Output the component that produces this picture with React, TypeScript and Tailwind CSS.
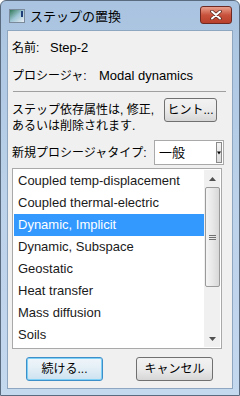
import React from "react";

const items = [
  "Coupled temp-displacement",
  "Coupled thermal-electric",
  "Dynamic, Implicit",
  "Dynamic, Subspace",
  "Geostatic",
  "Heat transfer",
  "Mass diffusion",
  "Soils",
];

const font = { fontFamily: '"Liberation Sans", "Noto Sans CJK JP", sans-serif' };

export default function App() {
  return (
    <div
      className="w-[240px] h-[396px] border border-[#5a6b80] rounded-t-[6px] bg-gradient-to-b from-[#a9c3e0] via-[#bcd2ea] to-[#c4d8ee] flex flex-col text-[12px] text-black"
      style={font}
    >
      {/* title bar */}
      <div className="h-[29px] flex items-center pl-[8px] pr-[8px] shrink-0">
        <div className="w-[16px] h-[14px] border border-[#7a8a9a] bg-gradient-to-br from-[#2f7a5a] via-[#9fc6d6] to-[#e8eef4] mr-[5px] mt-[1px] relative">
          <div className="absolute right-[1px] top-[1px] w-[2px] h-[6px] bg-[#1e3f7a]" />
        </div>
        <span className="text-[13px] leading-none mt-[1px]">ステップの置換</span>
        <div className="ml-auto mr-[-1px] mt-[-2px] w-[32px] h-[18px] rounded-[3px] border border-[#6e2a22] bg-gradient-to-b from-[#e8a08f] via-[#c8523c] to-[#b8402c] flex items-center justify-center">
          <svg width="14" height="10" viewBox="0 0 14 10">
            <path d="M3 1.5 L11 8.5 M11 1.5 L3 8.5" stroke="#5a2a22" strokeWidth="3.6" strokeLinecap="round" />
            <path d="M3 1.5 L11 8.5 M11 1.5 L3 8.5" stroke="#ffffff" strokeWidth="2" strokeLinecap="round" />
          </svg>
        </div>
      </div>

      {/* client area */}
      <div className="mx-[6px] mb-[6px] flex-1 border border-[#8fa6c0] bg-[#f0f0f0] flex flex-col pl-[4px] pr-[5px]">
        <div className="mt-[8px] leading-[18px] flex items-baseline">
          <span className="w-[38px]">名前:</span>
          <span className="text-[13px]">Step-2</span>
        </div>
        <div className="mt-[10px] leading-[18px] flex items-baseline">
          <span className="w-[87px]">プロシージャ:</span>
          <span className="text-[13px]">Modal dynamics</span>
        </div>
        <div className="mt-[6px] h-[1px] bg-[#a0a0a0] mr-[1px] ml-[1px]" />
        <div className="mt-[9px] flex items-start">
          <div className="leading-[16px] w-[152px] pt-[1px]">
            <div>ステップ依存属性は, 修正,</div>
            <div>あるいは削除されます.</div>
          </div>
          <button className="mt-[-3px] w-[53px] h-[24px] rounded-[3px] border border-[#707070] bg-gradient-to-b from-[#f2f2f2] via-[#ebebeb] to-[#d6d6d6] text-[12px] leading-none" style={font}>
            ヒント...
          </button>
        </div>
        <div className="mt-[6px] flex items-center">
          <span className="w-[142px]">新規プロシージャタイプ:</span>
          <div className="w-[70px] h-[25px] border border-[#a9a9a9] bg-white flex items-center pl-[4px] pr-[1px]">
            <span className="text-[13px]">一般</span>
            <div className="ml-auto w-[6px] h-[21px] border border-[#8a8a8a] bg-gradient-to-b from-[#f4f4f4] to-[#dcdcdc] flex items-center justify-center">
              <svg width="5" height="4" viewBox="0 0 5 4">
                <path d="M0 0 H5 L2.5 4 Z" fill="#000" />
              </svg>
            </div>
          </div>
        </div>
        <div className="mt-[3px] mr-[5px] h-[181px] border border-[#a9a9a9] bg-white flex p-[1px]">
          <div className="flex-1 flex flex-col">
            {items.map((it, i) => (
              <div
                key={it}
                className={
                  "h-[22px] leading-[22px] pl-[4px] text-[13px] " +
                  (i === 2 ? "bg-[#3399ff] text-white" : "text-[#1a1a1a]")
                }
              >
                {it}
              </div>
            ))}
          </div>
          {/* scrollbar */}
          <div className="w-[16px] bg-[#f0f0f0] flex flex-col items-center">
            <div className="h-[17px] flex items-center justify-center">
              <svg width="7" height="4" viewBox="0 0 7 4">
                <path d="M0 4 L3.5 0 L7 4 Z" fill="#505050" />
              </svg>
            </div>
            <div className="w-[15px] h-[100px] rounded-[2px] border border-[#9a9a9a] bg-gradient-to-r from-[#f4f4f4] via-[#e8e8e8] to-[#d8d8d8] flex flex-col items-center justify-center gap-[1px]">
              <div className="w-[7px] h-[1px] bg-[#707070]" />
              <div className="w-[7px] h-[1px] bg-[#707070]" />
              <div className="w-[7px] h-[1px] bg-[#707070]" />
            </div>
            <div className="flex-1" />
            <div className="h-[17px] flex items-center justify-center">
              <svg width="7" height="4" viewBox="0 0 7 4">
                <path d="M0 0 L7 0 L3.5 4 Z" fill="#505050" />
              </svg>
            </div>
          </div>
        </div>
        <div className="mt-[8px] flex">
          <button className="ml-[14px] w-[77px] h-[24px] rounded-[3px] border border-[#3c8fc8] shadow-[inset_0_0_0_1px_#7fd0f6] bg-gradient-to-b from-[#f0f6fa] via-[#e2eef6] to-[#cce2f0] text-[12px] leading-none" style={font}>
            続ける...
          </button>
          <button className="ml-[33px] w-[77px] h-[24px] rounded-[3px] border border-[#707070] bg-gradient-to-b from-[#f2f2f2] via-[#ebebeb] to-[#d6d6d6] text-[12px] leading-none" style={font}>
            キャンセル
          </button>
        </div>
      </div>
    </div>
  );
}
